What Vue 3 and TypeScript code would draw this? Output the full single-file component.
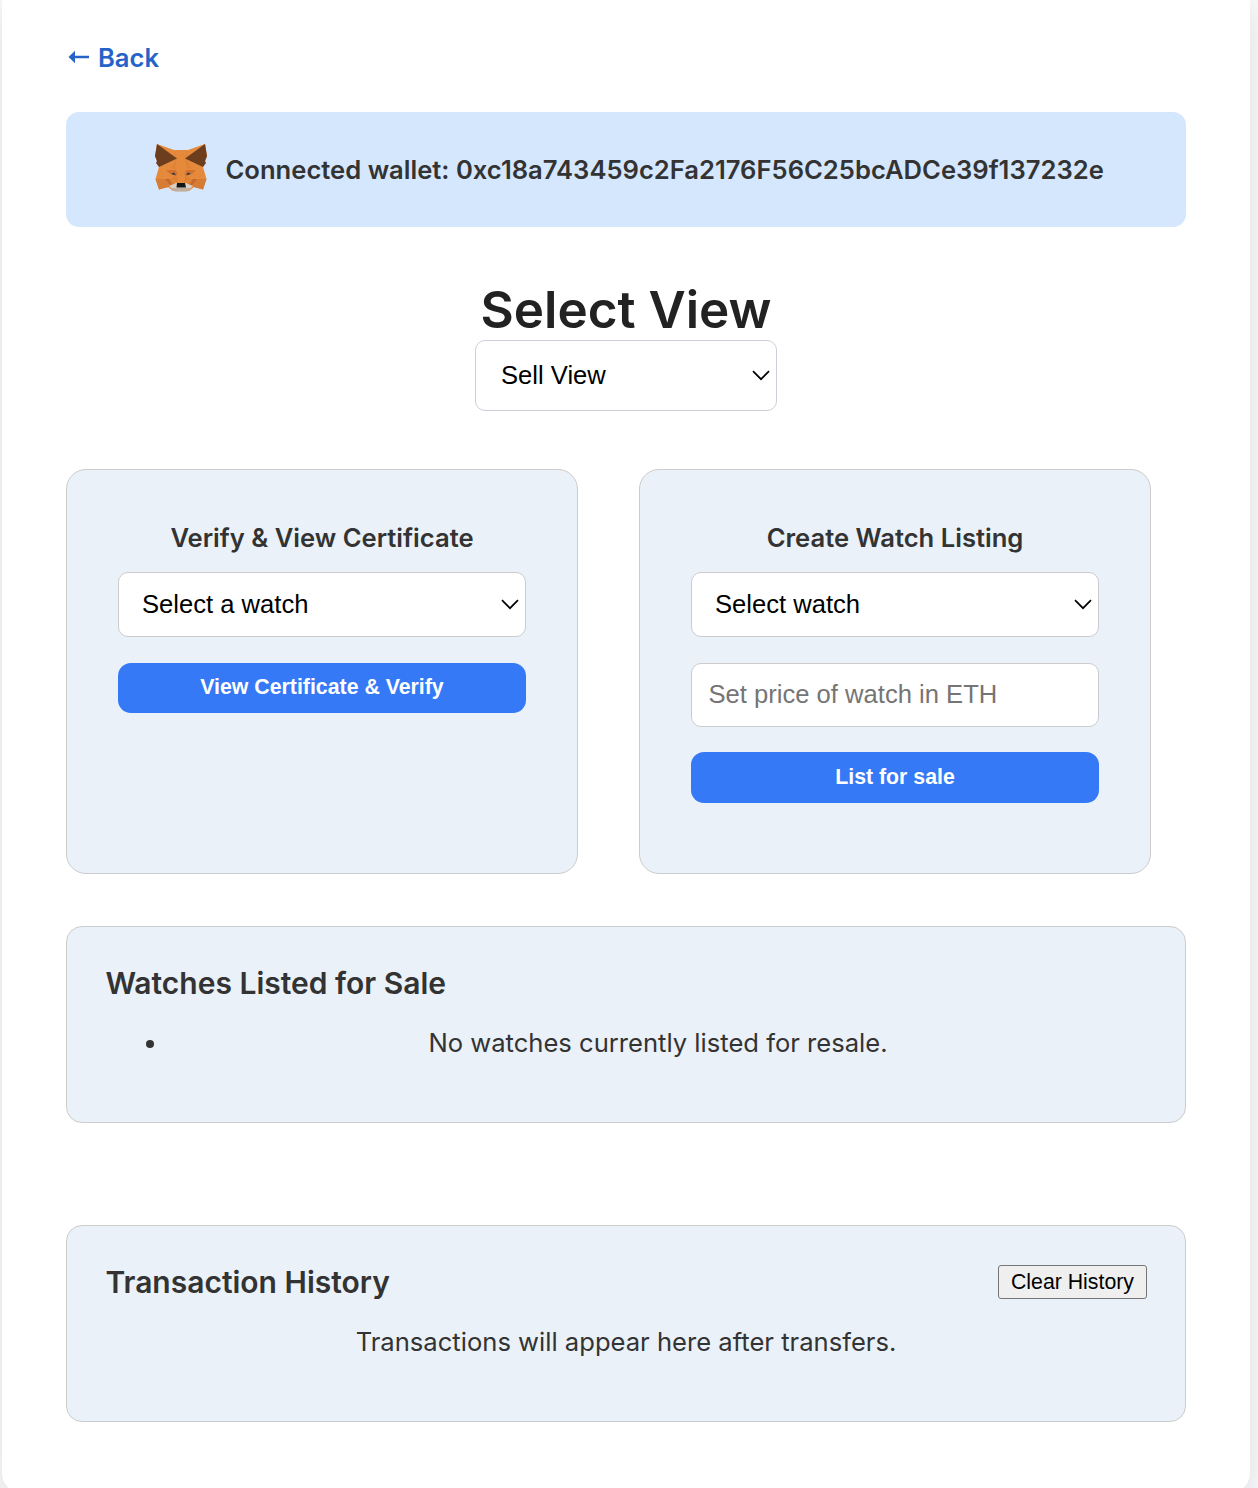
<script setup lang="ts">
import { ref } from 'vue'

const wallet = '0xc18a743459c2Fa2176F56C25bcADCe39f137232e'
const view = ref('sell')
const certificateWatch = ref('')
const listingWatch = ref('')
const price = ref('')
</script>

<template>
  <div class="page">
    <main class="container">
      <a class="back">
        <svg class="arrow" width="22" height="14" viewBox="0 0 22 14"><path d="M0.5 7 L7 0.7 V5.8 H21 V8.200 H7 V13.3Z" fill="currentColor" /></svg>
        <span>Back</span>
      </a>

      <section class="wallet">
        <svg class="fox" width="52" height="48" viewBox="0 0 52 48">
          <path fill="#E58A3A" d="M2 0 19 6H33L50 0 52 12 48 23 51.500 35 48 45.500 39 43 34 47H18L13 43 4 45.500 0.500 35 4 23 0 12Z" />
          <path fill="#D67C35" d="M0.500 35H15L21 41 4 45.500ZM51.500 35H37L31 41 48 45.500Z" />
          <path fill="#C5672D" d="M10 35H14L17 41 15.500 41.500ZM42 35H38L35 41 36.500 41.500Z" />
          <path fill="#D2702E" d="M11 26H21L22.500 31 15 30ZM41 26H31L29.500 31 37 30Z" />
          <path fill="#DB7B33" d="M19 6 22 14 20 25 16 24 21 15ZM33 6 30 14 32 25 36 24 31 15Z" opacity=".5" />
          <path fill="#DF8035" d="M22 31 23 39 16 35ZM30 31 29 39 36 35Z" />
          <path fill="#6D3E1D" d="M2 0 22 14.500 4 23 1 19 2 17 0 12ZM50 0 30 14.500 48 23 51 19 50 17 52 12Z" />
          <path fill="#D9CFC6" d="M14 42 21 39H31L38 42 32 47.500H20Z" />
          <path fill="#BFAF9E" d="M16 44 22 44H30L36 44 32 47.500H20Z" />
          <path fill="#161616" d="M22 39H30L31 43.500H21.500Z" />
          <path fill="#2B3947" d="M16 30 19 28.500 21 31.500ZM36 30 33 28.500 31 31.500Z" />
        </svg>
        <span class="wallet-text">Connected wallet: {{ wallet }}</span>
      </section>

      <h1>Select View</h1>
      <div class="select view-select">
        <select v-model="view"><option value="sell">Sell View</option></select>
        <svg class="chevron" width="18" height="11" viewBox="0 0 18 11"><path d="M1 1.200 9 9.200 17 1.200" /></svg>
      </div>

      <div class="cards">
        <section class="card">
          <h2>Verify &amp; View Certificate</h2>
          <div class="select">
            <select v-model="certificateWatch"><option value="">Select a watch</option></select>
            <svg class="chevron" width="18" height="11" viewBox="0 0 18 11"><path d="M1 1.200 9 9.200 17 1.200" /></svg>
          </div>
          <button class="primary">View Certificate &amp; Verify</button>
        </section>
        <section class="card">
          <h2>Create Watch Listing</h2>
          <div class="select">
            <select v-model="listingWatch"><option value="">Select watch</option></select>
            <svg class="chevron" width="18" height="11" viewBox="0 0 18 11"><path d="M1 1.200 9 9.200 17 1.200" /></svg>
          </div>
          <input v-model="price" placeholder="Set price of watch in ETH">
          <button class="primary list">List for sale</button>
        </section>
      </div>

      <section class="panel">
        <h3>Watches Listed for Sale</h3>
        <ul><li>No watches currently listed for resale.</li></ul>
      </section>

      <section class="panel history">
        <div class="panel-head">
          <h3>Transaction History</h3>
          <button class="clear">Clear History</button>
        </div>
        <p>Transactions will appear here after transfers.</p>
      </section>
    </main>
  </div>
</template>

<style>
body {
  overflow: hidden;
}
</style>

<style scoped>
* {
  box-sizing: border-box;
}
.page {
  height: 1488px;
  overflow: hidden;
  padding: 0 8px 0 2px;
  background: #f7f8fa;
  font-family: Inter, sans-serif;
  font-size: 25.6px;
  color: #333;
}
.container {
  height: 1493px;
  padding: 37px 64px 0;
  background: #fff;
  border-radius: 0 0 20px 20px;
  box-shadow: 0 8px 32px rgba(0, 0, 0, 0.1);
}
h1, h2, h3, p, ul {
  margin: 0;
}
.back {
  display: flex;
  align-items: center;
  width: max-content;
  height: 40px;
  padding-left: 2px;
  gap: 8px;
  color: #2563c9;
  font-weight: 600;
}
.wallet {
  display: flex;
  align-items: center;
  height: 115px;
  margin-top: 35px;
  padding-left: 89px;
  background: #d5e7fd;
  border-radius: 13px;
}
.fox {
  margin: 0 18.500px 3px 0;
}
.wallet-text {
  font-weight: 600;
  white-space: nowrap;
}
h1 {
  height: 62px;
  margin-top: 51px;
  font-size: 51.2px;
  line-height: 62px;
  text-align: center;
  font-weight: 600;
  color: #222;
}
.select {
  position: relative;
  height: 65px;
}
.select select {
  display: block;
  width: 100%;
  height: 100%;
  padding: 0 23px 2px;
  border: 1px solid #ccc;
  border-radius: 10px;
  appearance: none;
  background: #fff;
  color: #000;
  font: 25.6px "Liberation Sans", Arial, sans-serif;
}
.view-select {
  width: 302px;
  height: 71px;
  margin: 0 auto;
}
.view-select select {
  padding-left: 25px;
  border-color: #cbd0d8;
}
.chevron {
  position: absolute;
  right: 7px;
  top: 50%;
  margin-top: -6px;
  fill: none;
  stroke: #000;
  stroke-width: 1.7;
  pointer-events: none;
}
.cards {
  display: flex;
  gap: 61px;
  margin-top: 58px;
}
.card {
  display: flex;
  flex-direction: column;
  width: 512px;
  height: 405px;
  padding: 51px 51px 0;
  background: #eaf1f8;
  border: 1px solid #ccc;
  border-radius: 20px;
}
h2 {
  height: 34px;
  margin-bottom: 17px;
  font-size: 25.6px;
  line-height: 34px;
  font-weight: 600;
  text-align: center;
}
input {
  width: 100%;
  height: 64px;
  margin-top: 26px;
  padding: 0 16.500px 2px;
  border: 1px solid #ccc;
  border-radius: 10px;
  background: #fff;
  font: 25.6px "Liberation Sans", Arial, sans-serif;
}
input::placeholder {
  color: #757575;
}
.primary {
  height: 50px;
  margin-top: 26px;
  padding: 0 0 1px;
  border: 0;
  border-radius: 13px;
  background: #3579f7;
  color: #fff;
  font: bold 21.300px "Liberation Sans", Arial, sans-serif;
}
.list {
  height: 51px;
  margin-top: 25px;
}
.panel {
  height: 197px;
  margin-top: 52px;
  padding: 36px 38px 0;
  background: #eaf1f8;
  border: 1px solid #ccc;
  border-radius: 16px;
}
.history {
  margin-top: 102px;
}
.panel-head {
  display: flex;
  align-items: center;
  justify-content: space-between;
}
h3 {
  padding-left: 0.4px;
  font-size: 30px;
  line-height: 40px;
  font-weight: 600;
}
ul {
  margin-top: 20px;
  padding-left: 64px;
  line-height: 40px;
}
li, p {
  text-align: center;
}
p {
  margin-top: 20px;
  line-height: 40px;
}
.clear {
  height: 34px;
  padding: 0 12px;
  border: 1px solid #767676;
  border-radius: 3px;
  background: #efefef;
  color: #000;
  font: 21.300px "Liberation Sans", Arial, sans-serif;
}
</style>
